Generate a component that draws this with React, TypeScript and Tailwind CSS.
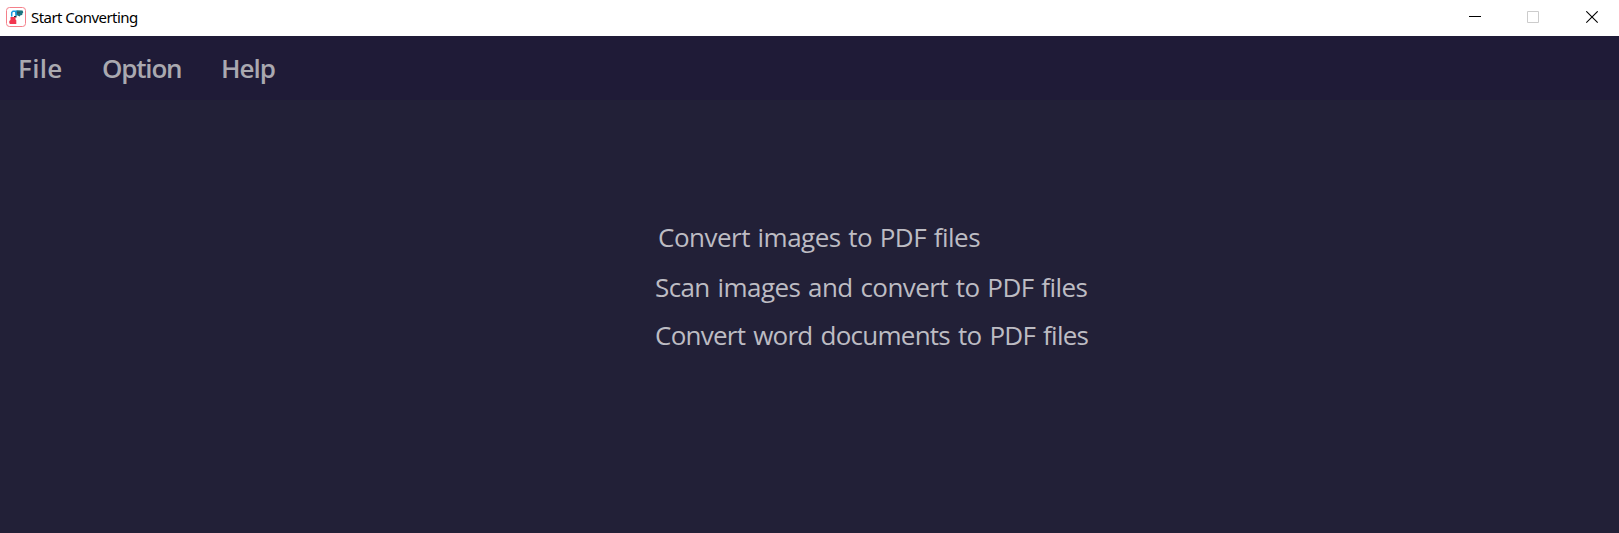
import React from "react";

function AppIcon() {
  return (
    <svg width="20" height="20" viewBox="0 0 20 20" className="shrink-0">
      <rect x="0.5" y="0.5" width="19" height="19" rx="3" fill="#fff" stroke="#f4808a" />
      <path d="M9 4.500 11 3.200l5.500.3.800 1.800-1 1.400v1.300l-1.800.2-.8 1.300-2.700-1.300-1 .2z" fill="#1c7480" />
      <path d="M11 5h3v1.500h-3z" fill="#34545f" />
      <path d="M5.700 9.500V5.500L7 4.200h3V9" fill="none" stroke="#1a9ae0" strokeWidth="1.500" />
      <path d="M8 9h2.500v1.500H8z" fill="#3a2c35" />
      <path d="M4.500 10h5v2.500l.8.800V17H4l-.7-1v-2l1.200-1z" fill="#f2364f" />
    </svg>
  );
}

function TitleBar() {
  return (
    <header className="flex h-9 items-center justify-between bg-white pl-1.5">
      <div className="flex items-center gap-[5px] pb-[2px]">
        <AppIcon />
        <h1 className="font-['Noto_Sans',sans-serif] text-[15px] leading-5 tracking-[-0.55px] text-black">Start Converting</h1>
      </div>
      <div className="flex h-full pb-px">
        <button aria-label="Minimize" className="flex w-[58px] items-center justify-center">
          <svg width="13" height="13" viewBox="0 0 13 13"><path d="M0 5.500h12" stroke="#000" /></svg>
        </button>
        <button aria-label="Maximize" disabled className="flex w-[58px] items-center justify-center">
          <svg width="13" height="13" viewBox="0 0 13 13"><path d="M.5.500h11v11H.5z" fill="none" stroke="#ccc" /></svg>
        </button>
        <button aria-label="Close" className="flex w-[57px] items-center justify-center pl-[3px]">
          <svg width="13" height="13" viewBox="0 0 13 13"><path d="m.3.300 11.400 11.400M11.700.3.300 11.700" stroke="#000" strokeWidth="1.100" /></svg>
        </button>
      </div>
    </header>
  );
}

export default function App() {
  return (
    <div className="flex h-[533px] w-full flex-col overflow-hidden bg-[#222037] font-['Comic_Sans_MS','Open_Sans',sans-serif]">
      <TitleBar />
      <nav className="flex h-16 items-start bg-[#1f1b37] pt-4 pl-[18px] text-[26px] leading-8 font-semibold text-[#aaa9b0]">
        <button className="w-[84px] text-left tracking-[0.3px]">File</button>
        <button className="w-[119px] text-left tracking-[-1.2px]">Option</button>
        <button className="text-left tracking-[-1px]">Help</button>
      </nav>
      <main className="flex flex-col items-start pt-[119px] pl-[655px] text-[26px] leading-9 whitespace-nowrap text-[#bdbcc3]">
        <button className="mb-[14px] ml-[3px] tracking-[-0.5px] [word-spacing:1.3px]">Convert images to PDF files</button>
        <button className="mb-[12px] tracking-[-0.6px] [word-spacing:1.75px]">Scan images and convert to PDF files</button>
        <button className="tracking-[-0.75px] [word-spacing:2px]">Convert word documents to PDF files</button>
      </main>
    </div>
  );
}
